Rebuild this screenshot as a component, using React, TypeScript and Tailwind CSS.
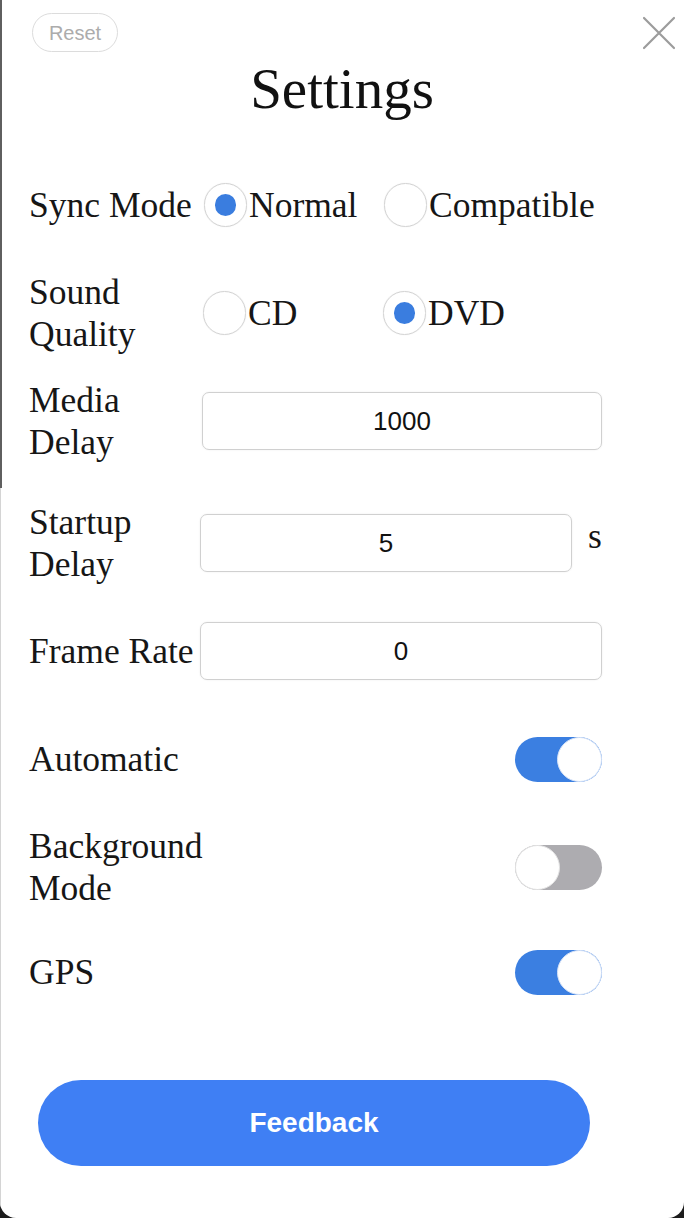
import { useState } from "react";

const serif = { fontFamily: '"Liberation Serif", "Times New Roman", serif' };
const sans = { fontFamily: '"Liberation Sans", Arial, sans-serif' };

const Radio = ({ checked, label, onClick }: { checked: boolean; label: string; onClick: () => void }) => (
  <button onClick={onClick} className="flex items-center w-[180px] text-left">
    <span className="w-[43px] h-[44px] rounded-full border border-[#d3d3d3] shadow-[0_0_1px_rgba(0,0,0,0.15)] flex items-center justify-center shrink-0">
      {checked && <span className="w-[21px] h-[22px] rounded-full bg-[#3a7ddf]" />}
    </span>
    <span className="ml-[2px] text-[35.5px] leading-[42px] text-[#161616] whitespace-nowrap">{label}</span>
  </button>
);

const Toggle = ({ on, onClick }: { on: boolean; onClick: () => void }) => (
  <button
    onClick={onClick}
    className={`w-[87px] h-[45px] rounded-full flex items-center ${on ? "bg-[#3b7fe1] justify-end" : "bg-[#adacb0] justify-start"}`}
  >
    <span className={`w-[45px] h-[45px] rounded-full bg-white border ${on ? "border-[#d5e2f7]" : "border-[#e3e3e3]"}`} />
  </button>
);

const Field = ({ value, className }: { value: string; className: string }) => (
  <input
    defaultValue={value}
    style={sans}
    className={`h-[58px] rounded-[7px] border border-[#d0d0d0] shadow-[0_0_2px_rgba(0,0,0,0.08)] text-center text-[26px] text-[#111] outline-none ${className}`}
  />
);

const Label = ({ lines }: { lines: string[] }) => (
  <div className="w-[171px] shrink-0 text-[35.5px] leading-[42px] text-[#161616] whitespace-nowrap">
    {lines.map((l) => (
      <div key={l}>{l}</div>
    ))}
  </div>
);

export default function App() {
  const [sync, setSync] = useState("normal");
  const [quality, setQuality] = useState("dvd");
  const [auto, setAuto] = useState(true);
  const [bg, setBg] = useState(false);
  const [gps, setGps] = useState(true);

  return (
    <div className="bg-[#1c1c1c] min-h-[1218px]">
      <div className="relative bg-white h-[1218px] rounded-b-[16px] overflow-hidden" style={serif}>
        <div className="absolute left-0 top-0 w-[2px] h-[488px] bg-[#5f5f5f]" />
        <div className="absolute left-0 top-[488px] w-px bottom-0 bg-[#d4d4d4]" />

        <div className="flex justify-between items-start pt-[13px] pl-[32px] pr-[8px]">
          <button
            style={sans}
            className="w-[86px] h-[39px] rounded-full border-[1.5px] border-[#dcdcdc] text-[20px] text-[#acacac]"
          >
            Reset
          </button>
          <button className="mt-[3px]">
            <svg width="34" height="34" viewBox="0 0 34 34" stroke="#9c9c9c" strokeWidth="2.2" strokeLinecap="round">
              <path d="M2 2 L32 32 M32 2 L2 32" />
            </svg>
          </button>
        </div>

        <h1 className="mt-[5px] text-center text-[57px] leading-[64px] text-[#111]">Settings</h1>

        <div className="ml-[29px] w-[573px] mt-[42px] flex flex-col gap-[24px]">
          <div className="h-[84px] flex items-center">
            <Label lines={["Sync Mode"]} />
            <div className="flex ml-[4px]">
              <Radio checked={sync === "normal"} label="Normal" onClick={() => setSync("normal")} />
              <Radio checked={sync === "compatible"} label="Compatible" onClick={() => setSync("compatible")} />
            </div>
          </div>

          <div className="h-[84px] flex items-center">
            <Label lines={["Sound", "Quality"]} />
            <div className="flex ml-[3px]">
              <Radio checked={quality === "cd"} label="CD" onClick={() => setQuality("cd")} />
              <Radio checked={quality === "dvd"} label="DVD" onClick={() => setQuality("dvd")} />
            </div>
          </div>

          <div className="h-[84px] flex items-center">
            <Label lines={["Media", "Delay"]} />
            <Field value="1000" className="w-[401px] ml-[2px]" />
          </div>

          <div className="h-[84px] flex items-center mt-[14px]">
            <Label lines={["Startup", "Delay"]} />
            <Field value="5" className="w-[372px]" />
            <span className="ml-[16px] -mt-[14px] text-[35.5px] leading-[42px] text-[#161616]">s</span>
          </div>

          <div className="h-[84px] flex items-center">
            <Label lines={["Frame Rate"]} />
            <Field value="0" className="w-[402px]" />
          </div>

          <div className="h-[84px] flex items-center justify-between">
            <Label lines={["Automatic"]} />
            <Toggle on={auto} onClick={() => setAuto(!auto)} />
          </div>

          <div className="h-[84px] flex items-center justify-between">
            <Label lines={["Background", "Mode"]} />
            <Toggle on={bg} onClick={() => setBg(!bg)} />
          </div>

          <div className="h-[84px] flex items-center justify-between -mt-[3px]">
            <Label lines={["GPS"]} />
            <Toggle on={gps} onClick={() => setGps(!gps)} />
          </div>
        </div>

        <button
          style={sans}
          className="block ml-[38px] mt-[66px] w-[552px] h-[86px] rounded-full bg-[#3f7ff4] text-white text-[28px] font-bold"
        >
          Feedback
        </button>
      </div>
    </div>
  );
}
